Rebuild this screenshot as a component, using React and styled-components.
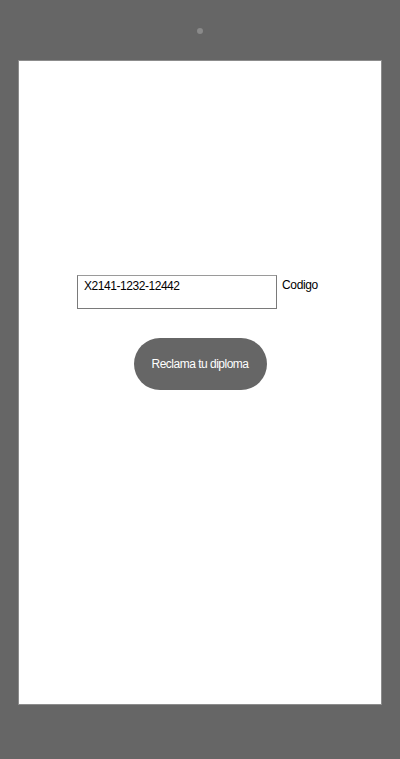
import styled, { createGlobalStyle } from "styled-components";

const GlobalStyle = createGlobalStyle`
  html, body {
    margin: 0;
    padding: 0;
    background: #666666;
  }
  body {
    font-family: "Liberation Sans", Arial, sans-serif;
  }
`;

// Marco del dispositivo
const Device = styled.div`
  width: 400px;
  height: 759px;
  background: #666666;
  display: flex;
  flex-direction: column;
  align-items: center;
  box-sizing: border-box;
  padding-top: 28px;
`;

const Camera = styled.div`
  width: 6px;
  height: 6px;
  border-radius: 50%;
  background: #8a8a8a;
`;

const Screen = styled.div`
  margin-top: 26px;
  width: 364px;
  height: 645px;
  background: #ffffff;
  border: 1px solid #8c8c8c;
  box-sizing: border-box;
  display: flex;
  flex-direction: column;
  align-items: center;
  padding-top: 214px;
`;

const Row = styled.div`
  display: flex;
  align-items: flex-start;
  gap: 5px;
`;

const CodeField = styled.textarea`
  width: 200px;
  height: 34px;
  box-sizing: border-box;
  border: 1px solid #7a7a7a;
  border-top-color: #9a9a9a;
  padding: 3px 6px;
  margin: 0;
  font-family: "Liberation Sans", Arial, sans-serif;
  font-size: 12px;
  letter-spacing: -0.45px;
  line-height: 15px;
  color: #000;
  resize: none;
  outline: none;
  overflow: hidden;
`;

const Label = styled.label`
  min-width: 41px;
  font-size: 12px;
  letter-spacing: -0.35px;
  line-height: 15px;
  padding-top: 3px;
  color: #000;
`;

const ClaimButton = styled.button`
  margin-top: 29px;
  width: 133px;
  height: 52px;
  border: none;
  border-radius: 26px;
  background: #666666;
  color: #ffffff;
  font-family: "Liberation Sans", Arial, sans-serif;
  font-size: 12px;
  letter-spacing: -0.5px;
  cursor: pointer;
`;

export default function App() {
  return (
    <>
      <GlobalStyle />
      <Device>
        <Camera />
        <Screen>
          <Row>
            <CodeField id="codigo" defaultValue="X2141-1232-12442" />
            <Label htmlFor="codigo">Codigo</Label>
          </Row>
          <ClaimButton>Reclama tu diploma</ClaimButton>
        </Screen>
      </Device>
    </>
  );
}
